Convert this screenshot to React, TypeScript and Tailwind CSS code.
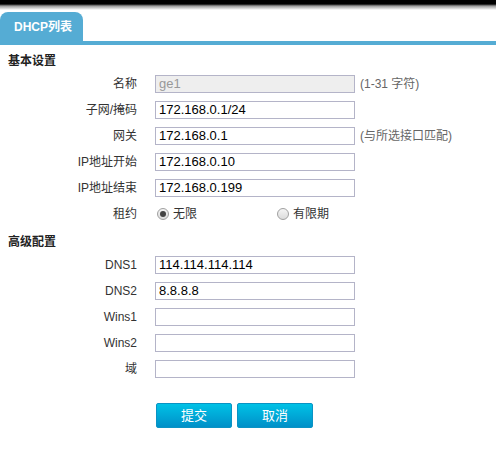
const font = { fontFamily: '"Liberation Sans", "Noto Sans CJK SC", sans-serif' };

type Row = { label: string; value: string; hint?: string; disabled?: boolean };

const basic: Row[] = [
  { label: "名称", value: "ge1", hint: "(1-31 字符)", disabled: true },
  { label: "子网/掩码", value: "172.168.0.1/24" },
  { label: "网关", value: "172.168.0.1", hint: "(与所选接口匹配)" },
  { label: "IP地址开始", value: "172.168.0.10" },
  { label: "IP地址结束", value: "172.168.0.199" },
];

const advanced: Row[] = [
  { label: "DNS1", value: "114.114.114.114" },
  { label: "DNS2", value: "8.8.8.8" },
  { label: "Wins1", value: "" },
  { label: "Wins2", value: "" },
  { label: "域", value: "" },
];

function Field({ row }: { row: Row }) {
  return (
    <div className="flex h-[26px] items-center">
      <label className="w-[138px] shrink-0 pr-[1px] text-right text-[12px] text-[#333]">{row.label}</label>
      <input
        readOnly
        disabled={row.disabled}
        value={row.value}
        className={
          "ml-[17px] h-[18px] w-[200px] border border-[#b4b4c8] px-[3px] text-[13px] outline-none " +
          (row.disabled ? "bg-[#eeeeee] text-[#999]" : "bg-white text-black")
        }
        style={font}
      />
      {row.hint ? <span className="ml-[5px] text-[12px] text-[#666]">{row.hint}</span> : null}
    </div>
  );
}

function Radio({ checked, label }: { checked?: boolean; label: string }) {
  return (
    <span className="flex items-center gap-[4px] text-[12px] text-[#333]">
      <span className="flex h-[12px] w-[12px] items-center justify-center rounded-full border border-[#a0a0a0] bg-gradient-to-b from-[#f4f4f4] to-[#dcdcdc]">
        {checked ? <span className="h-[6px] w-[6px] rounded-full bg-[#444]" /> : null}
      </span>
      {label}
    </span>
  );
}

export default function App() {
  return (
    <div className="h-[474px] w-[496px] overflow-hidden bg-white" style={font}>
      <div className="h-[10px] bg-[linear-gradient(to_bottom,#000_0%,#000_40%,#999_60%,#fff_100%)]" />
      <div className="mt-[2px] flex h-[29px] items-end">
        <div className="flex h-[29px] w-[83px] items-center rounded-t-[8px] bg-[#55acd4] pl-[14px] text-[12px] font-bold text-white">
          DHCP列表
        </div>
      </div>
      <div className="h-[4px] bg-[#55acd4]" />

      <div className="pl-[8px] pt-[7px] text-[12px] font-bold text-[#222]">基本设置</div>
      <div className="mt-[1px]">
        {basic.map((r) => (
          <Field key={r.label} row={r} />
        ))}
        <div className="flex h-[26px] items-center">
          <label className="w-[138px] shrink-0 pr-[1px] text-right text-[12px] text-[#333]">租约</label>
          <div className="ml-[19px] flex">
            <div className="w-[120px]">
              <Radio checked label="无限" />
            </div>
            <Radio label="有限期" />
          </div>
        </div>
      </div>

      <div className="pl-[8px] pt-[6px] text-[12px] font-bold text-[#222]">高级配置</div>
      <div className="mt-[1px]">
        {advanced.map((r) => (
          <Field key={r.label} row={r} />
        ))}
      </div>

      <div className="ml-[156px] mt-[21px] flex gap-[5px]">
        {["提交", "取消"].map((t) => (
          <button
            key={t}
            className="h-[25px] w-[76px] rounded-[2px] border border-[#0a93c4] bg-gradient-to-b from-[#00c2e6] to-[#0090c8] text-[13px] text-white"
          >
            {t}
          </button>
        ))}
      </div>
    </div>
  );
}
